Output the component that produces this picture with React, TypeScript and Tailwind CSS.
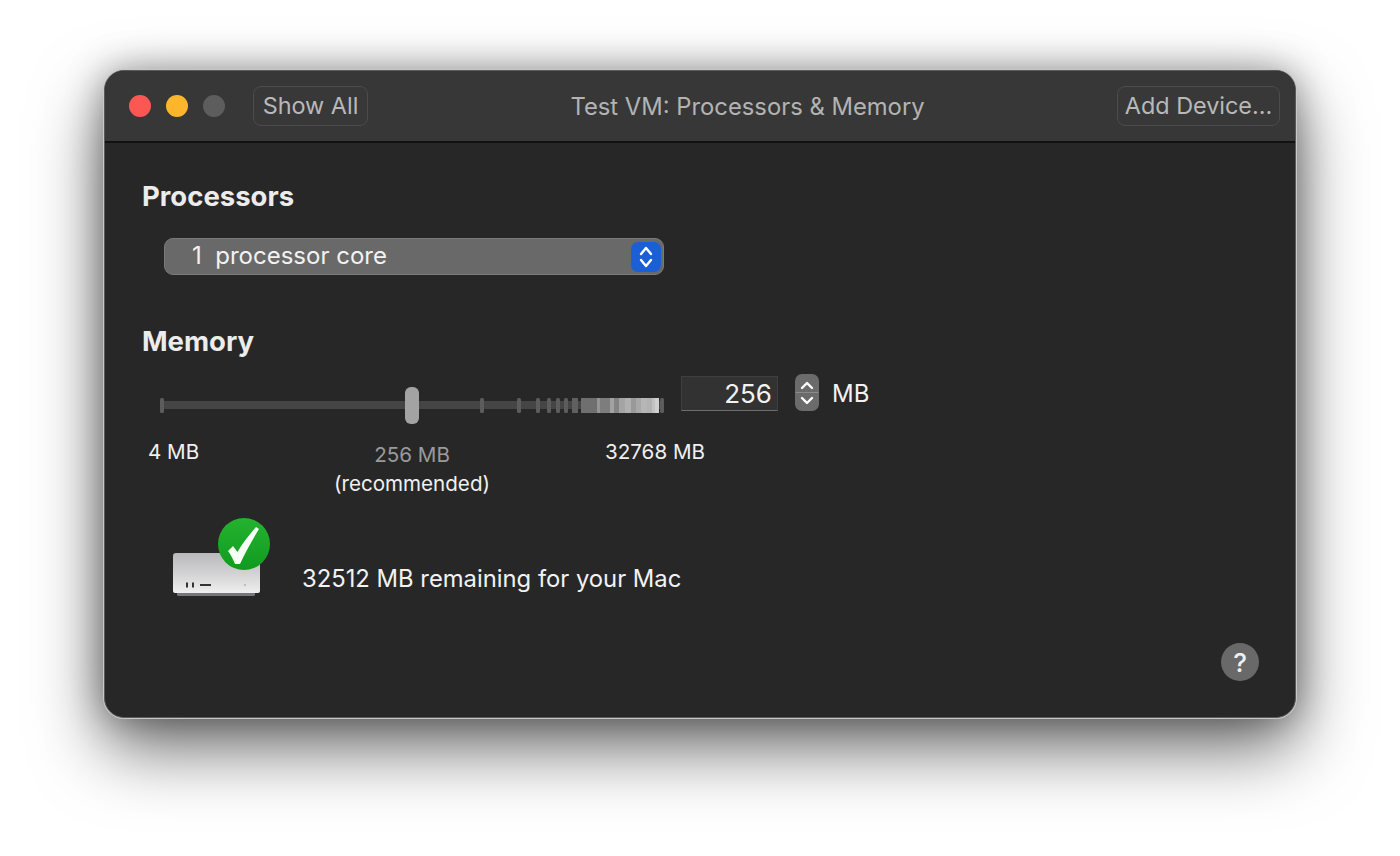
const sparseTicks = [162, 482, 519, 538, 549, 558, 566];

// dense end of the memory slider, light grows towards the right
const denseBands = [
  { x: 572, w: 6, c: "#606060" },
  { x: 581, w: 16, c: "#6f6f6f" },
  { x: 597, w: 3, c: "#959595" },
  { x: 600, w: 10, c: "#7d7d7d" },
  { x: 610, w: 4, c: "#a2a2a2" },
  { x: 614, w: 5, c: "#848484" },
  { x: 619, w: 6, c: "#a4a4a4" },
  { x: 625, w: 6, c: "#b0b0b0" },
  { x: 631, w: 5, c: "#999999" },
  { x: 636, w: 5, c: "#a8a8a8" },
  { x: 641, w: 6, c: "#b6b6b6" },
  { x: 647, w: 5, c: "#b2b2b2" },
  { x: 652, w: 3, c: "#c2c2c2" },
  { x: 655, w: 4, c: "#d0d0d0" },
];

function MemorySlider() {
  return (
    <svg width="512" height="42" viewBox="156 384 512 42" className="block">
      <rect x="162" y="401" width="498" height="8" fill="#454545" />
      {sparseTicks.map((x) => (
        <rect key={x} x={x - 2} y="398" width="4" height="15" rx="1.5" fill="#5c5c5c" />
      ))}
      {denseBands.map((b) => (
        <rect key={b.x} x={b.x} y="398" width={b.w} height="15" fill={b.c} />
      ))}
      <rect x="660" y="398" width="4" height="15" rx="1.5" fill="#5c5c5c" />
      <rect x="405" y="387" width="14" height="37" rx="6" fill="#a3a3a3" />
    </svg>
  );
}

function MacIcon() {
  return (
    <svg width="104" height="82" viewBox="0 0 104 82" className="block">
      <defs>
        <linearGradient id="macBody" x1="0" y1="0" x2="0" y2="1">
          <stop offset="0" stopColor="#b9b9bb" />
          <stop offset="0.5" stopColor="#d2d2d4" />
          <stop offset="1" stopColor="#efefef" />
        </linearGradient>
        <linearGradient id="badge" x1="0" y1="0" x2="0" y2="1">
          <stop offset="0" stopColor="#25b22f" />
          <stop offset="1" stopColor="#109b20" />
        </linearGradient>
      </defs>
      <rect x="8" y="74" width="78" height="4" rx="1.5" fill="#77777a" />
      <path d="M4 38a3 3 0 0 1 3-3h81a3 3 0 0 1 3 3v35a2 2 0 0 1-2 2H6a2 2 0 0 1-2-2z" fill="url(#macBody)" />
      <rect x="17" y="64.5" width="2" height="5" fill="#333333" />
      <rect x="23" y="64.5" width="2" height="5" fill="#333333" />
      <rect x="31" y="66" width="11" height="2" fill="#333333" />
      <circle cx="76" cy="67" r="1" fill="#b0b0b0" />
      <circle cx="75" cy="26" r="26" fill="url(#badge)" />
      <path d="M59 33L64 28L68.5 34C73 26 80 17 87 9L90 11C84 21 77 33 71 46L66 46C64 41 62 37 59 33z" fill="#f6fff6" />
    </svg>
  );
}

function TitleButton({ label, width }: { label: string; width: string }) {
  return (
    <div className={`flex h-[40px] items-center justify-center rounded-[8px] border border-[#4c4c4c] bg-[#383838] text-[23.4px] text-[#b9b9b9] ${width}`}>
      {label}
    </div>
  );
}

export default function App() {
  return (
    <div
      className="flex h-[856px] w-[1400px] items-start justify-center overflow-hidden bg-white pt-[70px] text-white"
      style={{ fontFamily: "Inter, 'Noto Sans', sans-serif" }}
    >
      <div className="flex h-[648px] w-[1192px] flex-col overflow-hidden rounded-[20px] border border-[#5a5a5a] bg-[#272727] shadow-[0_0_0_1px_#c8c8c8,0_30px_70px_rgba(0,0,0,0.58),0_0_36px_rgba(0,0,0,0.35)]">
        {/* Title bar */}
        <div className="flex h-[72px] shrink-0 items-center border-b-2 border-[#111111] bg-[#373737] pl-[24px] pr-[15px]">
          <div className="flex items-center gap-[15px]">
            <span className="h-[22px] w-[22px] rounded-full bg-[#fc5753]" />
            <span className="h-[22px] w-[22px] rounded-full bg-[#fdb62b]" />
            <span className="h-[22px] w-[22px] rounded-full bg-[#5d5d5d]" />
          </div>
          <div className="ml-[28px]">
            <TitleButton label="Show All" width="w-[115px]" />
          </div>
          <div className="flex-1 pt-[2px] pl-[10px] text-center text-[23.8px] text-[#b3b3b3]">
            Test VM: Processors &amp; Memory
          </div>
          <TitleButton label="Add Device..." width="w-[163px]" />
        </div>

        {/* Body */}
        <div className="relative flex-1 pl-[37px]">
          <h2 className="mt-[35px] text-[27.5px] leading-[36px] font-bold text-[#ececec]">Processors</h2>

          <div className="mt-[24px] ml-[22px] flex h-[37px] w-[500px] items-center justify-between rounded-[9px] border border-[#7a7a7a] bg-[#696969] pr-[2px] pl-[27px] text-[24px] text-[#f2f2f2]">
            <span className="mb-[2px] whitespace-pre">1  processor core</span>
            <span className="flex h-[30px] w-[30px] items-center justify-center rounded-[7px] bg-[#1a5fd6]">
              <svg width="16" height="24" viewBox="0 0 16 24" fill="none" stroke="#ffffff" strokeWidth="2.4" strokeLinecap="round" strokeLinejoin="round">
                <path d="M3 9l5-6 5 6" />
                <path d="M3 15l5 6 5-6" />
              </svg>
            </span>
          </div>

          <h2 className="mt-[48px] text-[27.5px] leading-[36px] font-bold text-[#ececec]">Memory</h2>

          <div className="mt-[15px] ml-[14px] flex items-start">
            <div className="mt-[10px]">
              <MemorySlider />
            </div>
            <div className="mt-[2px] ml-[13px] flex h-[35px] w-[97px] items-center justify-end border border-[#3f3f3f] border-b-[#6e6e6e] bg-[#323232] pr-[5px] text-[26px] text-[#f2f2f2]">
              256
            </div>
            <div className="ml-[17px] flex h-[37px] w-[24px] flex-col items-center justify-center rounded-[7px] bg-[#6b6b6b]">
              <svg width="24" height="37" viewBox="0 0 24 37" fill="none" stroke="#ffffff" strokeWidth="2.4" strokeLinecap="round" strokeLinejoin="round">
                <path d="M7 14l5-5 5 5" />
                <path d="M1 18.5h22" stroke="#8a8a8a" strokeWidth="1" />
                <path d="M7 24l5 5 5-5" />
              </svg>
            </div>
            <span className="ml-[13px] text-[24px] leading-[40px] text-[#f2f2f2]">MB</span>
          </div>

          {/* Slider labels */}
          <div className="mt-[12px] flex items-start text-[20.6px] leading-[28px]">
            <span className="ml-[6px] w-[60px] text-[#f0f0f0]">4 MB</span>
            <div className="ml-[104px] mt-[3px] flex w-[200px] flex-col items-center">
              <span className="text-[#9a9a9a]">256 MB</span>
              <span className="mt-[1px] text-[#f0f0f0]">(recommended)</span>
            </div>
            <span className="ml-[93px] text-[#f0f0f0]">32768 MB</span>
          </div>

          <div className="mt-[20px] ml-[27px] flex items-center">
            <MacIcon />
            <span className="mt-[40px] ml-[29px] text-[23.8px] text-[#f2f2f2]">32512 MB remaining for your Mac</span>
          </div>

          {/* Help button */}
          <div className="absolute right-[36px] bottom-[36px] flex h-[38px] w-[38px] items-center justify-center rounded-full bg-[#696969] text-[26px] font-medium text-[#f0f0f0]">
            ?
          </div>
        </div>
      </div>
    </div>
  );
}
